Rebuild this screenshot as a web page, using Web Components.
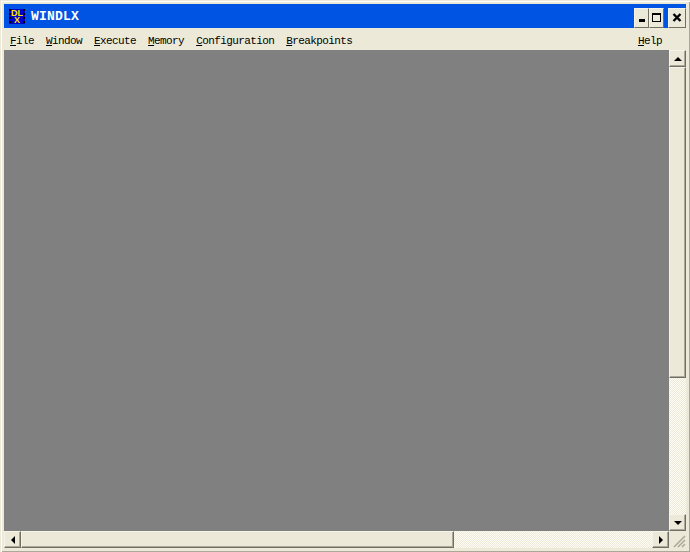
<!DOCTYPE html>
<html>
<head>
<meta charset="utf-8">
<style>
  html, body { margin: 0; padding: 0; background: #ece9d8; }
  body { width: 690px; height: 552px; overflow: hidden; }
</style>
</head>
<body>
<xp-window></xp-window>
<script>
const ARROWS = {
  up: '<path d="M4 0 L8 4 L0 4 Z"/>',
  down: '<path d="M0 0 L8 0 L4 4 Z"/>',
  left: '<path d="M4 0 L4 8 L0 4 Z"/>',
  right: '<path d="M0 0 L0 8 L4 4 Z"/>'
};
const checker = `background-color:#ece9d8;background-image:conic-gradient(#fffdf6 25%,transparent 0 50%,#fffdf6 0 75%,transparent 0);background-size:2px 2px;`;

class XpButton extends HTMLElement {
  connectedCallback() {
    const dir = this.getAttribute('dir');
    const box = dir == 'up' || dir == 'down' ? '8 4' : '4 8';
    const [w, h] = box.split(' ');
    this.attachShadow({mode: 'open'}).innerHTML = `
      <style>
        :host { display: flex; align-items: center; justify-content: center; box-sizing: border-box;
          width: 17px; height: 17px; flex: none; background: #ece9d8;
          border: 1px solid; border-color: #f5f3ea #716f64 #716f64 #f5f3ea;
          box-shadow: inset -1px -1px 0 #aca899; }
        svg { display: block; }
      </style>
      <svg width="${w}" height="${h}" viewBox="0 0 ${box}">${ARROWS[dir]}</svg>`;
  }
}
customElements.define('xp-button', XpButton);

class XpScrollbar extends HTMLElement {
  connectedCallback() {
    const v = this.getAttribute('orient') == 'v';
    this.attachShadow({mode: 'open'}).innerHTML = `
      <style>
        :host { display: flex; flex-direction: ${v ? 'column' : 'row'}; flex: none; box-sizing: border-box;
          ${v ? 'width: 17px;' : 'height: 17px;'} ${checker} }
        .thumb { box-sizing: border-box; background: #ece9d8; flex: none;
          ${v ? 'height: ' : 'width: '}${this.getAttribute('thumb')}px;
          border: 1px solid; border-color: #f5f3ea #716f64 #716f64 #f5f3ea;
          box-shadow: inset -1px -1px 0 #aca899; }
        .track { flex: 1; }
      </style>
      <xp-button dir="${v ? 'up' : 'left'}"></xp-button>
      <div class="thumb"></div>
      <div class="track"></div>
      <xp-button dir="${v ? 'down' : 'right'}"></xp-button>`;
  }
}
customElements.define('xp-scrollbar', XpScrollbar);

class XpMenu extends HTMLElement {
  connectedCallback() {
    const items = [['F','ile'],['W','indow'],['E','xecute'],['M','emory'],['C','onfiguration'],['B','reakpoints']];
    const link = ([a, b]) => `<span><u>${a}</u>${b}</span>`;
    this.attachShadow({mode: 'open'}).innerHTML = `
      <style>
        :host { display: flex; align-items: center; height: 22px; flex: none; box-sizing: border-box;
          padding: 4px 24px 0 6px; gap: 12px; background: #ece9d8; color: #000;
          font: 11px/14px "Liberation Mono", monospace; letter-spacing: -0.6px; }
        .help { margin-left: auto; }
      </style>
      ${items.map(link).join('')}
      <span class="help"><u>H</u>elp</span>`;
  }
}
customElements.define('xp-menu', XpMenu);

class XpLogo extends HTMLElement {
  connectedCallback() {
    this.attachShadow({mode: 'open'}).innerHTML = `
      <style>
        :host { display: flex; justify-content: center; box-sizing: border-box;
          width: 16px; height: 15px; flex: none; padding-top: 1px; color: #ffe800;
          background-color: #0000c8;
          background-image: repeating-linear-gradient(#000 0 2px, transparent 2px 4px), repeating-linear-gradient(#000 0 2px, transparent 2px 4px);
          background-size: 2px 100%; background-position: left top, right top; background-repeat: no-repeat;
          font: bold 9px/7px "Liberation Sans", sans-serif; text-align: center; }
        span { display: block; width: min-content; }
      </style>
      <span>DL X</span>`;
  }
}
customElements.define('xp-logo', XpLogo);

class XpTitlebar extends HTMLElement {
  connectedCallback() {
    this.attachShadow({mode: 'open'}).innerHTML = `
      <style>
        :host { display: flex; align-items: center; height: 24px; flex: none; box-sizing: border-box;
          padding: 0 0 0 5px; background: #0054e3; color: #fff; }
        xp-logo { margin: 1px 6px 0 0; }
        .title { font: bold 13px/16px "Liberation Mono", monospace; letter-spacing: 0.2px; flex: 1; padding-top: 2px; }
        .btns { display: flex; margin-top: 4px; }
        .btn { width: 15px; height: 20px; box-sizing: border-box; background: #ece9d8; display: block;
          border: 1px solid; border-color: #f5f3ea #716f64 #716f64 #f5f3ea; }
        .close { width: 18px; margin-left: 4px; }
      </style>
      <xp-logo></xp-logo>
      <span class="title">WINDLX</span>
      <div class="btns">
        <svg class="btn" viewBox="0 0 13 18"><rect x="4" y="10" width="6" height="3" fill="#000"/></svg>
        <svg class="btn" viewBox="0 0 13 18"><path d="M2 4h9v9H2z M3 6v6h7V6z" fill="#000" fill-rule="evenodd"/></svg>
        <svg class="btn close" viewBox="0 0 16 18"><path d="M4.500 5L11.500 12M11.500 5L4.500 12" stroke="#000" stroke-width="2.400" fill="none"/></svg>
      </div>`;
  }
}
customElements.define('xp-titlebar', XpTitlebar);

class XpWindow extends HTMLElement {
  connectedCallback() {
    this.attachShadow({mode: 'open'}).innerHTML = `
      <style>
        :host { display: flex; flex-direction: column; box-sizing: border-box; width: 690px; height: 552px;
          background: #ece9d8; padding: 4px;
          box-shadow: inset 1px 1px 0 #ece9d8, inset 2px 2px 0 #fff, inset -1px -1px 0 #aca899; }
        .client { flex: 1; min-height: 0; display: grid; grid-template-columns: 1fr 17px; grid-template-rows: 1fr 17px; }
        .canvas { background: #808080; }
        xp-scrollbar[orient=v] { grid-row: 1; grid-column: 2; }
        xp-scrollbar[orient=h] { grid-row: 2; grid-column: 1; }
        .grip { grid-row: 2; grid-column: 2; }
        .grip svg { display: block; }
      </style>
      <xp-titlebar></xp-titlebar>
      <xp-menu></xp-menu>
      <div class="client">
        <div class="canvas"></div>
        <xp-scrollbar orient="v" thumb="311"></xp-scrollbar>
        <xp-scrollbar orient="h" thumb="433"></xp-scrollbar>
        <div class="grip">
          <svg width="17" height="17" viewBox="0 0 17 17"><path d="M16 5L5 16M16 9L9 16M16 13L13 16" stroke="#aca899" stroke-width="1.500"/></svg>
        </div>
      </div>`;
  }
}
customElements.define('xp-window', XpWindow);
</script>
</body>
</html>
